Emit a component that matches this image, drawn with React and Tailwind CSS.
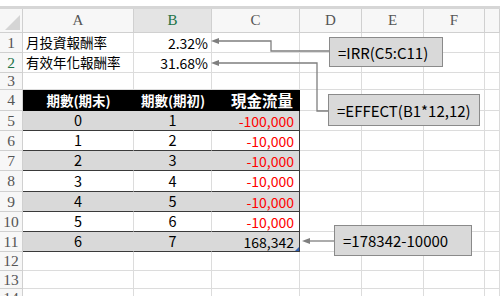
import React from "react";

const cjk = { fontFamily: '"Noto Sans CJK TC", "Noto Sans", sans-serif' };
const serif = { fontFamily: '"Liberation Serif", "DejaVu Serif", serif' };

const COLS = ["A", "B", "C", "D", "E", "F", ""];

// Grid cell with the light sheet gridlines on its right and bottom edges
function Cell({ className = "", children }) {
  return (
    <div className={`relative min-h-0 flex items-center leading-none border-r border-b border-[#dcdcdc] overflow-hidden whitespace-nowrap ${className}`}>
      {children}
    </div>
  );
}

function RowHead({ n, active }) {
  return (
    <div
      style={serif}
      className={`min-h-0 overflow-hidden flex items-center justify-center leading-none border-r border-b border-[#d0d0d0] bg-[#f7f7f7] text-[15.5px] ${active ? "text-[#217346]" : "text-[#555]"}`}
    >
      {n}
    </div>
  );
}

function EmptyCells() {
  return (
    <>
      <Cell />
      <Cell />
      <Cell />
      <Cell />
    </>
  );
}

const table = [
  { a: "0", b: "1", c: "-100,000", neg: true },
  { a: "1", b: "2", c: "-10,000", neg: true },
  { a: "2", b: "3", c: "-10,000", neg: true },
  { a: "3", b: "4", c: "-10,000", neg: true },
  { a: "4", b: "5", c: "-10,000", neg: true },
  { a: "5", b: "6", c: "-10,000", neg: true },
  { a: "6", b: "7", c: "168,342", neg: false },
];

export default function App() {
  return (
    <div className="relative w-[500px] h-[302px] bg-white overflow-hidden" style={cjk}>
      <div className="h-[6px] bg-white" />
      <div className="h-[3px] bg-[#d6d6d6]" />
      <div className="h-[287px] overflow-hidden">
        <div className="grid grid-cols-[23px_111px_78px_88px_62px_62px_61px_15px] grid-rows-[24px_20px_20px_17px_21px_20px_20px_20px_21px_20px_20px_20px_19px_18px_18px]">
          {/* column headers */}
          <div className="relative border-r border-b border-[#d0d0d0] bg-[#f7f7f7]">
            <div className="absolute right-[2px] bottom-[2px] w-[15px] h-[15px] bg-[#d5d5d5] [clip-path:polygon(100%_0,100%_100%,0_100%)]" />
          </div>
          {COLS.map((c) => (
            <div
              key={c || "g"}
              style={serif}
              className={`flex items-center justify-center leading-none border-r border-b border-[#d0d0d0] text-[15px] ${c === "B" ? "bg-[#e4e4e4] text-[#217346]" : "bg-[#f7f7f7] text-[#555]"}`}
            >
              {c}
            </div>
          ))}

          {/* row 1 */}
          <RowHead n="1" />
          <Cell className="pl-[3px] text-[13.5px] text-black">月投資報酬率</Cell>
          <Cell className="justify-end pr-[3px] text-[14px] text-black">2.32%</Cell>
          <Cell />
          <EmptyCells />

          {/* row 2 */}
          <RowHead n="2" active />
          <Cell className="pl-[3px] text-[13.5px] text-black">有效年化報酬率</Cell>
          <Cell className="justify-end pr-[3px] text-[14px] text-black">31.68%</Cell>
          <Cell />
          <EmptyCells />

          {/* row 3 */}
          <RowHead n="3" />
          <Cell />
          <Cell />
          <Cell />
          <EmptyCells />

          {/* row 4: table header */}
          <RowHead n="4" />
          <div className="flex items-center justify-center leading-none bg-black text-white font-bold text-[13.5px]">期數(期末)</div>
          <div className="flex items-center justify-center leading-none bg-black text-white font-bold text-[13.5px]">期數(期初)</div>
          <div className="flex items-center justify-end pr-[6px] leading-none bg-black text-white font-bold text-[15.5px] border-r border-black">現金流量</div>
          <EmptyCells />

          {/* rows 5-11: cash flow table */}
          {table.map((r, i) => {
            const shaded = i % 2 === 0;
            const last = i === table.length - 1;
            return (
              <React.Fragment key={i}>
                <RowHead n={String(i + 5)} />
                <div
                  className={`min-h-0 flex items-center justify-center leading-none border-b border-r border-b-[#3a3a3a] text-[14.5px] text-black ${shaded ? "bg-[#d9d9d9] border-r-[#d9d9d9]" : "bg-white border-r-[#dcdcdc]"}`}
                >
                  {r.a}
                </div>
                <div
                  className={`min-h-0 flex items-center justify-center leading-none border-b border-r border-b-[#3a3a3a] text-[14.5px] text-black ${shaded ? "bg-[#d9d9d9] border-r-[#d9d9d9]" : "bg-white border-r-[#dcdcdc]"}`}
                >
                  {r.b}
                </div>
                <div
                  className={`relative min-h-0 flex items-center justify-end pr-[5px] leading-none border-b border-r border-b-[#3a3a3a] border-r-[#3a3a3a] text-[14px] ${r.neg ? "text-[#ff0000]" : "text-black"} ${shaded ? "bg-[#d9d9d9]" : "bg-white"}`}
                >
                  {r.c}
                  {last && (
                    <div className="absolute right-0 bottom-0 w-[4px] h-[4px] bg-[#2f5fb3] [clip-path:polygon(100%_0,100%_100%,0_100%)]" />
                  )}
                </div>
                <EmptyCells />
              </React.Fragment>
            );
          })}

          {/* rows 12-14 */}
          <RowHead n="12" />
          <Cell />
          <Cell />
          <Cell />
          <EmptyCells />

          <RowHead n="13" />
          <Cell />
          <Cell />
          <Cell />
          <EmptyCells />

          <RowHead n="14" />
          <Cell />
          <Cell />
          <Cell />
          <EmptyCells />
        </div>
      </div>

      {/* connector lines with arrowheads */}
      <svg className="absolute inset-0 pointer-events-none" width="500" height="302" viewBox="0 0 500 302">
        <g fill="none" stroke="#7f7f7f" strokeWidth="1.3">
          <polyline points="329,51 271,51 271,41 217,41" />
          <polyline points="328,111 317,111 317,63 217,63" />
          <polyline points="334,241 308,241" />
        </g>
        <g fill="#7f7f7f">
          <polygon points="211,41 219,38 219,44" />
          <polygon points="211,63 219,60 219,66" />
          <polygon points="302,241 310,238 310,244" />
        </g>
      </svg>

      {/* formula callouts */}
      <div className="absolute left-[329px] top-[37px] w-[114px] h-[30px] flex items-center pl-[8px] leading-none bg-[#d9d9d9] border border-[#8a8a8a] text-[15px] text-black">
        =IRR(C5:C11)
      </div>
      <div className="absolute left-[328px] top-[94px] w-[152px] h-[32px] flex items-center pl-[8px] leading-none bg-[#d9d9d9] border border-[#8a8a8a] text-[15px] text-black">
        =EFFECT(B1*12,12)
      </div>
      <div className="absolute left-[334px] top-[225px] w-[138px] h-[31px] flex items-center pl-[8px] leading-none bg-[#d9d9d9] border border-[#8a8a8a] text-[15px] text-black">
        =178342-10000
      </div>
    </div>
  );
}
